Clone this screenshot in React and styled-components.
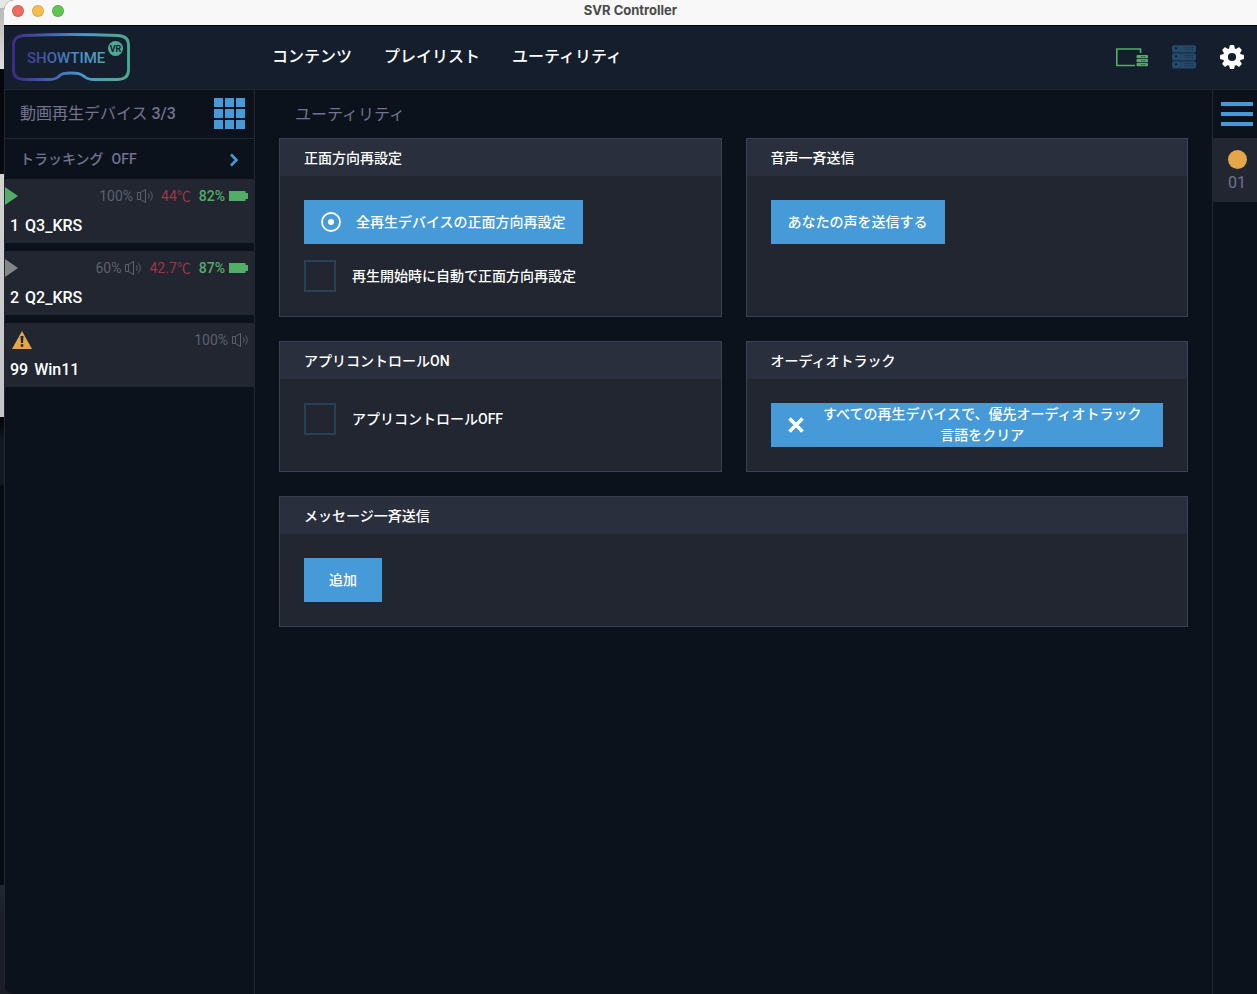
import React from 'react';
import styled, { createGlobalStyle } from 'styled-components';

const GlobalStyle = createGlobalStyle`
  * {
    box-sizing: border-box;
  }
  body {
    margin: 0;
    background: #0c121b;
    color: #fff;
    font-family: Roboto, 'Noto Sans CJK JP', sans-serif;
    font-size: 14px;
    font-weight: 500;
    line-height: 21px;
  }
  button {
    font: inherit;
    color: inherit;
    cursor: pointer;
  }
`

const Desktop = styled.div`
  display: flex;
  min-height: 100vh;
  padding-left: 4px;
  background: linear-gradient(
    #e6e6e6 8px, #b9b9b9 8px, #dcdcdc 69px,
    #04070c 69px, #060a11 174px,
    #d2d2d0 174px, #c4c5c9 417px,
    #000 417px, #0b1019 432px, #111925 440px, #111925 484px,
    #070b12 486px, #070b12 885px,
    #232731 885px, #1a1d26 925px, #1a1d26
  );
`
const Window = styled.div`
  display: flex;
  flex: 1;
  flex-direction: column;
  min-width: 0;
  overflow: hidden;
  border-radius: 10px 0 0 10px;
  background: #0c121b;
`
const TitleBar = styled.div`
  display: grid;
  grid-template-columns: 1fr auto 1fr;
  align-items: center;
  height: 26px;
  padding: 0 8px 4px;
  border-bottom: 1px solid #000;
  background: #f7f8f7;
`
const Lights = styled.div`
  display: flex;
  gap: 8px;
`
const Light = styled.span`
  width: 12px;
  height: 12px;
  border: 1px solid rgba(0, 0, 0, 0.12);
  border-radius: 50%;
  background: ${({ color }) => color};
`
const WindowTitle = styled.div`
  color: #4a4a4a;
  font-family: Inter, sans-serif;
  font-size: 13px;
  font-weight: 700;
`

const Header = styled.header`
  display: flex;
  align-items: center;
  height: 64px;
  padding: 0 13px 2px 8px;
  border-bottom: 1px solid #222732;
  background: #151e2c;
`
const LogoLink = styled.a`
  display: flex;
  width: 260px;
`
const Nav = styled.nav`
  display: flex;
  flex: 1;
  gap: 32px;
`
const NavItem = styled.a`
  color: #fff;
  font-size: 16px;
  line-height: 24px;
  text-decoration: none;
`
const HeaderActions = styled.div`
  display: flex;
  align-items: center;
  gap: 24px;
`
const IconButton = styled.button`
  display: flex;
  padding: 0;
  border: 0;
  background: none;
`

const Content = styled.div`
  display: flex;
  flex: 1;
`
const Sidebar = styled.aside`
  flex: 0 0 251px;
  border: solid #222732;
  border-width: 0 1px;
`
const SidebarHead = styled.div`
  display: flex;
  align-items: center;
  justify-content: space-between;
  height: 49px;
  padding: 0 9px 1px 15px;
  border-bottom: 1px solid #222732;
  color: #73728f;
  font-size: 16px;
  font-weight: 400;

  strong {
    font-weight: 500;
  }
`
const GridIcon = styled.span`
  display: grid;
  grid-template-columns: repeat(3, 9px);
  grid-auto-rows: 9px;
  gap: 2px;

  i {
    background: #469ad7;
  }
`
const Tracking = styled.button`
  display: flex;
  align-items: center;
  gap: 8px;
  width: 100%;
  height: 40px;
  padding: 1px 15px 0;
  border: 0;
  background: none;
  color: #73728f;

  svg {
    margin-left: auto;
  }
`
const DeviceList = styled.div`
  display: flex;
  flex-direction: column;
  gap: 8px;
`
const Device = styled.article`
  display: flex;
  flex-direction: column;
  gap: 9px;
  height: 64px;
  padding: 8px 6px 0 0;
  background: #212631;
`
const DeviceStatus = styled.div`
  display: flex;
  align-items: center;
  gap: 8px;
  height: 18px;
`
const DeviceState = styled.span`
  display: flex;
  flex: 1;
  padding-left: ${({ $inset }) => ($inset ? '7px' : '0')};
`
const Stat = styled.span`
  display: flex;
  align-items: center;
  gap: 4px;
  color: ${({ color }) => color};
  font-weight: ${({ $strong }) => ($strong ? 500 : 400)};
`
const DeviceName = styled.div`
  display: flex;
  gap: 6px;
  padding-left: 5px;
  font-size: 16px;
  line-height: 24px;
`

const Main = styled.main`
  flex: 1;
  min-width: 0;
  padding: 0 24px 24px;
`
const PageTitle = styled.h1`
  margin: 0;
  padding: 1px 0 0 16px;
  color: #73728f;
  font-size: 16px;
  font-weight: 400;
  line-height: 47px;
`
const Panels = styled.div`
  display: grid;
  grid-template-columns: 1fr 1fr;
  gap: 24px;
`
const Panel = styled.section`
  grid-column: ${({ $wide }) => ($wide ? '1 / -1' : 'auto')};
  border: 1px solid #3b4153;
  background: #212631;
`
const PanelTitle = styled.h2`
  margin: 0;
  padding: 9px 24px 7px;
  background: #2a2f3d;
  font-size: 14px;
  font-weight: 500;
  line-height: 21px;
`
const PanelBody = styled.div`
  display: flex;
  flex-direction: column;
  align-items: flex-start;
  gap: 16px;
  min-height: 92px;
  padding: 24px;
`
const Button = styled.button`
  display: flex;
  align-items: center;
  justify-content: center;
  gap: 15px;
  width: ${({ $full }) => ($full ? '100%' : 'auto')};
  min-width: 78px;
  height: 44px;
  padding: 0 16px;
  border: 1px solid #469ad7;
  background: #469ad7;
  color: #fff;

  svg {
    flex: none;
  }
  span {
    flex: ${({ $full }) => ($full ? 1 : 'none')};
  }
`
const Check = styled.label`
  display: flex;
  align-items: center;
  gap: 16px;

  input {
    appearance: none;
    width: 32px;
    height: 32px;
    margin: 0;
    border: 2px solid #283f56;
  }
  input:checked {
    background: #469ad7;
  }
`

const Rail = styled.aside`
  flex: 0 0 45px;
  border-left: 1px solid #222732;
`
const RailMenu = styled.button`
  display: flex;
  flex-direction: column;
  justify-content: center;
  gap: 6px;
  width: 100%;
  height: 48px;
  padding: 0 4px 0 8px;
  border: 0;
  background: none;

  i {
    height: 4px;
    background: #469ad7;
  }
`
const RailItem = styled.button`
  display: flex;
  flex-direction: column;
  align-items: center;
  gap: 3px;
  width: 100%;
  height: 64px;
  padding: 12px 0 0 4px;
  border: 0;
  background: #212631;
  color: #73728f;
  font-size: 16px;
  font-weight: 400;
`
const Dot = styled.span`
  width: 19px;
  height: 19px;
  border-radius: 50%;
  background: #e3a74a;
`

const Logo = () => (
  <svg width="118" height="48" viewBox="0 0 118 48" role="img" aria-label="SHOWTIME VR">
    <defs>
      <linearGradient id="logo" gradientUnits="userSpaceOnUse" x1="0" y1="0" x2="118" y2="0">
        <stop offset="0.04" stopColor="#3d2e8a" />
        <stop offset="0.6" stopColor="#4a96d0" />
        <stop offset="0.88" stopColor="#4caa94" />
      </linearGradient>
    </defs>
    <path
      d="M12 2.5 Q60 .5 106 2.5 Q116.500 3 116.500 12 V37 Q116.500 46 106 46.500 H82 Q76 46.500 73 44 C68 40.500 66 40 59 40 C52 40 50 40.500 46 44 Q43 46.500 37 46.500 H12 Q1.500 46 1.500 37 V12 Q1.500 3 12 2.500Z"
      fill="none" stroke="url(#logo)" strokeWidth="2.800"
    />
    <text x="15" y="30" fill="url(#logo)" fontFamily="Roboto, sans-serif" fontSize="15" fontWeight="500">SHOWTIME</text>
    <circle cx="103.500" cy="15.500" r="7.500" fill="url(#logo)" />
    <text x="103.500" y="19" textAnchor="middle" fill="#151e2c" fontFamily="Roboto, sans-serif" fontSize="9" fontWeight="700">VR</text>
  </svg>
)

const SyncIcon = () => (
  <svg width="32" height="24" viewBox="0 0 32 24" fill="#53ad68">
    <path d="M24.500 8V4H.800V20.500H19" fill="none" stroke="#53ad68" strokeWidth="1.600" />
    <rect x="20.500" y="10" width="11.500" height="3.300" rx="1" />
    <rect x="20.500" y="14" width="11.500" height="3.300" rx="1" />
    <rect x="20.500" y="18" width="11.500" height="3.300" rx="1" />
    <path d="M25 11.700H30M25 15.700H30M25 19.700H30" stroke="#151e2c" strokeWidth=".8" strokeDasharray="1 .6" />
  </svg>
)

const ServerIcon = () => (
  <svg width="24" height="24" viewBox="0 0 24 24">
    {[0, 8, 16].map(y => (
      <g key={y}>
        <rect y={y + 0.3} width="24" height="7.200" rx="1.800" fill="#25496a" />
        <rect x="3" y={y + 2.5} width="2" height="1.500" fill="#131c2a" />
        <path d={`M13 ${y + 2.5}H22M13 ${y + 4.5}H22`} stroke="#193048" strokeWidth="1.200" strokeDasharray="1 .8" />
      </g>
    ))}
  </svg>
)

const GearIcon = () => (
  <svg width="24" height="24" viewBox="-12 -12 24 24">
    <circle r="6.600" fill="none" stroke="#fff" strokeWidth="5" />
    {[0, 45, 90, 135, 180, 225, 270, 315].map(deg => (
      <path key={deg} d="M-2.900 -8 L-2.300 -11.200 Q-2.100 -12 -1.300 -12 H1.300 Q2.100 -12 2.300 -11.200 L2.900 -8Z" fill="#fff" transform={`rotate(${deg})`} />
    ))}
  </svg>
)

const SpeakerIcon = () => (
  <svg width="16" height="14" viewBox="0 0 16 14" fill="none" stroke="#5c616b">
    <path d="M.5 3.500H3.500V10.500H.5ZM3.500 3.500L8.500 .5V13.500L3.500 10.500" />
    <path d="M11.500 4.500Q13 7 11.500 9.500M13.500 2.500Q17 7 13.500 11.500" />
  </svg>
)

const BatteryIcon = () => (
  <svg width="19" height="10" viewBox="0 0 19 10" fill="#53ad68">
    <path d="M0 0H16.500V2H19V8H16.500V10H0Z" />
  </svg>
)

const PlayIcon = ({ color }) => (
  <svg width="13" height="18" viewBox="0 0 13 18">
    <path d="M0 0L13 9L0 18Z" fill={color} />
  </svg>
)

const WarningIcon = () => (
  <svg width="20" height="18" viewBox="0 0 20 18">
    <path d="M10 0L20 18H0Z" fill="#e3a74a" />
    <path d="M8.500 5H11.500L11 12H9ZM8.700 13.300H11.300V15.700H8.700Z" fill="#212631" />
  </svg>
)

const ChevronIcon = () => (
  <svg width="10" height="14" viewBox="0 0 10 14">
    <path d="M2 1.500L7.500 7L2 12.500" fill="none" stroke="#469ad7" strokeWidth="2.600" />
  </svg>
)

const TargetIcon = () => (
  <svg width="20" height="20" viewBox="0 0 20 20">
    <circle cx="10" cy="10" r="9" fill="none" stroke="#fff" strokeWidth="1.800" />
    <circle cx="10" cy="10" r="3" fill="#fff" />
  </svg>
)

const ClearIcon = () => (
  <svg width="16" height="16" viewBox="0 0 16 16">
    <path d="M1.500 1.500L14.500 14.500M14.500 1.500L1.500 14.500" stroke="#fff" strokeWidth="3.600" />
  </svg>
)

const devices = [
  { id: '1', name: 'Q3_KRS', state: 'playing', volume: '100%', temp: '44℃', battery: '82%' },
  { id: '2', name: 'Q2_KRS', state: 'idle', volume: '60%', temp: '42.7℃', battery: '87%' },
  { id: '99', name: 'Win11', state: 'warning', volume: '100%' },
]

const DeviceCard = ({ device }) => (
  <Device>
    <DeviceStatus>
      <DeviceState $inset={device.state === 'warning'}>
        {device.state === 'warning'
          ? <WarningIcon />
          : <PlayIcon color={device.state === 'playing' ? '#53ad68' : '#858585'} />}
      </DeviceState>
      <Stat color="#5c616b">{device.volume}<SpeakerIcon /></Stat>
      {device.temp && <Stat color="#a23445">{device.temp}</Stat>}
      {device.battery && <Stat color="#53ad68" $strong>{device.battery}<BatteryIcon /></Stat>}
    </DeviceStatus>
    <DeviceName><span>{device.id}</span><span>{device.name}</span></DeviceName>
  </Device>
)

const App = () => {
  return (
    <>
      <GlobalStyle />
      <Desktop>
        <Window>
          <TitleBar>
            <Lights>
              <Light color="#ed6a5f" />
              <Light color="#f5bf4f" />
              <Light color="#61c554" />
            </Lights>
            <WindowTitle>SVR Controller</WindowTitle>
          </TitleBar>

          <Header>
            <LogoLink href="#"><Logo /></LogoLink>
            <Nav>
              <NavItem href="#contents">コンテンツ</NavItem>
              <NavItem href="#playlist">プレイリスト</NavItem>
              <NavItem href="#utility">ユーティリティ</NavItem>
            </Nav>
            <HeaderActions>
              <IconButton aria-label="同期"><SyncIcon /></IconButton>
              <IconButton aria-label="サーバー"><ServerIcon /></IconButton>
              <IconButton aria-label="設定"><GearIcon /></IconButton>
            </HeaderActions>
          </Header>

          <Content>
            <Sidebar>
              <SidebarHead>
                <span>動画再生デバイス <strong>3/3</strong></span>
                <IconButton aria-label="グリッド表示">
                  <GridIcon><i /><i /><i /><i /><i /><i /><i /><i /><i /></GridIcon>
                </IconButton>
              </SidebarHead>
              <Tracking>
                <span>トラッキング</span>
                <span>OFF</span>
                <ChevronIcon />
              </Tracking>
              <DeviceList>
                {devices.map(device => <DeviceCard key={device.id} device={device} />)}
              </DeviceList>
            </Sidebar>

            <Main>
              <PageTitle>ユーティリティ</PageTitle>
              <Panels>
                <Panel>
                  <PanelTitle>正面方向再設定</PanelTitle>
                  <PanelBody>
                    <Button><TargetIcon /><span>全再生デバイスの正面方向再設定</span></Button>
                    <Check><input type="checkbox" />再生開始時に自動で正面方向再設定</Check>
                  </PanelBody>
                </Panel>
                <Panel>
                  <PanelTitle>音声一斉送信</PanelTitle>
                  <PanelBody>
                    <Button>あなたの声を送信する</Button>
                  </PanelBody>
                </Panel>
                <Panel>
                  <PanelTitle>アプリコントロールON</PanelTitle>
                  <PanelBody>
                    <Check><input type="checkbox" />アプリコントロールOFF</Check>
                  </PanelBody>
                </Panel>
                <Panel>
                  <PanelTitle>オーディオトラック</PanelTitle>
                  <PanelBody>
                    <Button $full>
                      <ClearIcon />
                      <span>すべての再生デバイスで、優先オーディオトラック言語をクリア</span>
                    </Button>
                  </PanelBody>
                </Panel>
                <Panel $wide>
                  <PanelTitle>メッセージ一斉送信</PanelTitle>
                  <PanelBody>
                    <Button>追加</Button>
                  </PanelBody>
                </Panel>
              </Panels>
            </Main>

            <Rail>
              <RailMenu aria-label="メニュー"><i /><i /><i /></RailMenu>
              <RailItem><Dot />01</RailItem>
            </Rail>
          </Content>
        </Window>
      </Desktop>
    </>
  );
}

export default App;
